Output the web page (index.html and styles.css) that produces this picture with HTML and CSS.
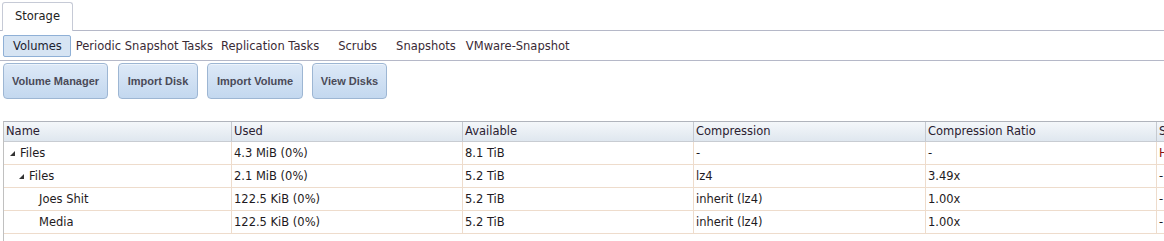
FILE: index.html
```html
<!DOCTYPE html>
<html lang="en">
<head>
    <meta charset="UTF-8">
    <title>Storage</title>
    <link rel="stylesheet" href="styles.css">
</head>
<body>
    <div class="tabbar">
        <div class="tab">Storage</div>
    </div>
    <div class="subnav">
        <span class="sub active">Volumes</span>
        <span class="sub">Periodic Snapshot Tasks</span>
        <span class="sub">Replication Tasks</span>
        <span class="sub wide">Scrubs</span>
        <span class="sub wide snap">Snapshots</span>
        <span class="sub">VMware-Snapshot</span>
    </div>
    <div class="toolbar">
        <button class="btn btn-manager">Volume Manager</button>
        <button class="btn btn-disk">Import Disk</button>
        <button class="btn btn-import">Import Volume</button>
        <button class="btn btn-view">View Disks</button>
    </div>

    <div class="grid">
        <div class="row head">
            <div class="cell">Name</div>
            <div class="cell">Used</div>
            <div class="cell">Available</div>
            <div class="cell">Compression</div>
            <div class="cell">Compression Ratio</div>
            <div class="cell">Status</div>
        </div>
        <div class="row">
            <div class="cell lvl0"><span class="tri"></span>Files</div>
            <div class="cell">4.3 MiB (0%)</div>
            <div class="cell">8.1 TiB</div>
            <div class="cell">-</div>
            <div class="cell">-</div>
            <div class="cell status">HEALTHY</div>
        </div>
        <div class="row">
            <div class="cell lvl1"><span class="tri"></span>Files</div>
            <div class="cell">2.1 MiB (0%)</div>
            <div class="cell">5.2 TiB</div>
            <div class="cell">lz4</div>
            <div class="cell">3.49x</div>
            <div class="cell">-</div>
        </div>
        <div class="row">
            <div class="cell lvl2">Joes Shit</div>
            <div class="cell">122.5 KiB (0%)</div>
            <div class="cell">5.2 TiB</div>
            <div class="cell">inherit (lz4)</div>
            <div class="cell">1.00x</div>
            <div class="cell">-</div>
        </div>
        <div class="row">
            <div class="cell lvl2">Media</div>
            <div class="cell">122.5 KiB (0%)</div>
            <div class="cell">5.2 TiB</div>
            <div class="cell">inherit (lz4)</div>
            <div class="cell">1.00x</div>
            <div class="cell">-</div>
        </div>
    </div>
</body>
</html>
```

FILE: styles.css
```css
body {
    margin: 0;
    height: 100vh;
    display: flex;
    flex-direction: column;
    background: #fff;
    font-family: "DejaVu Sans", Verdana, sans-serif;
    font-size: 11.5px;
    color: #1e1a22;
    overflow: hidden;
}
.tabbar {
    display: flex;
    height: 30px;
    padding-left: 2px;
    border-bottom: 1px solid #b5b8c8;
}
.tab {
    margin-top: 2px;
    width: 69px;
    height: 28px;
    line-height: 27px;
    text-align: center;
    border: 1px solid #c6cad6;
    border-bottom: none;
    border-radius: 3px 3px 0 0;
    background: #fff;
    margin-bottom: -1px;
    color: #222;
}
.subnav {
    display: flex;
    align-items: center;
    height: 29px;
    padding-left: 3px;
    border-bottom: 1px solid #b5b8c8;
    color: #3a2a36;
}
.sub {
    padding: 0 4px;
    line-height: 20px;
    white-space: nowrap;
}
.sub.wide {
    padding-left: 15px;
}
.sub.snap {
    padding-right: 6px;
}
.sub.active {
    border: 1px solid #8fb0d6;
    border-radius: 2px;
    background: #d6e4f3;
    padding: 0 8px 0 9px;
    margin-right: 1px;
    color: #1a2230;
}
.toolbar {
    display: flex;
    gap: 9px;
    padding: 2px 0 0 3px;
    height: 58px;
    flex: none;
}
.btn {
    height: 36px;
    padding: 0;
    text-align: center;
    font-family: "Liberation Sans", Arial, sans-serif;
    font-size: 11px;
    font-weight: bold;
    color: #4a4a58;
    border: 1px solid #9db6d3;
    border-radius: 4px;
    background: linear-gradient(#dde9f7, #c3d8ef);
    box-shadow: inset 0 1px 0 #eef4fb;
}
.btn-manager {
    width: 105px;
    margin-right: 1px;
}
.btn-disk {
    width: 80px;
}
.btn-import {
    width: 96px;
}
.btn-view {
    width: 75px;
}
.grid {
    flex: 1;
    margin-left: 3px;
    border-left: 1px solid #c0c0c0;
    border-top: 1px solid #b0b4bc;
    overflow: hidden;
}
.row {
    display: grid;
    grid-template-columns: 228px 231px 231px 232px 231px 231px;
    width: max-content;
    height: 22px;
    border-bottom: 1px solid #eedccc;
}
.row .cell {
    padding-left: 2px;
    line-height: 22px;
    white-space: nowrap;
    overflow: hidden;
    border-right: 1px solid #eedccc;
}
.row.head {
    height: 19px;
    background: linear-gradient(#f4f7fa, #dfe7ef);
    border-bottom: 1px solid #c8ccd2;
}
.row.head .cell {
    line-height: 19px;
    border-right: 1px solid #c6cad0;
    color: #2a2030;
}
.tri {
    display: inline-block;
    width: 0;
    height: 0;
    border-left: 5px solid transparent;
    border-bottom: 5px solid #333;
    margin-right: 5px;
    vertical-align: 1px;
}
.row .lvl0 {
    padding-left: 6px;
}
.row .lvl1 {
    padding-left: 15px;
}
.row .lvl2 {
    padding-left: 35px;
}
.status {
    color: #8a1010;
}
```
